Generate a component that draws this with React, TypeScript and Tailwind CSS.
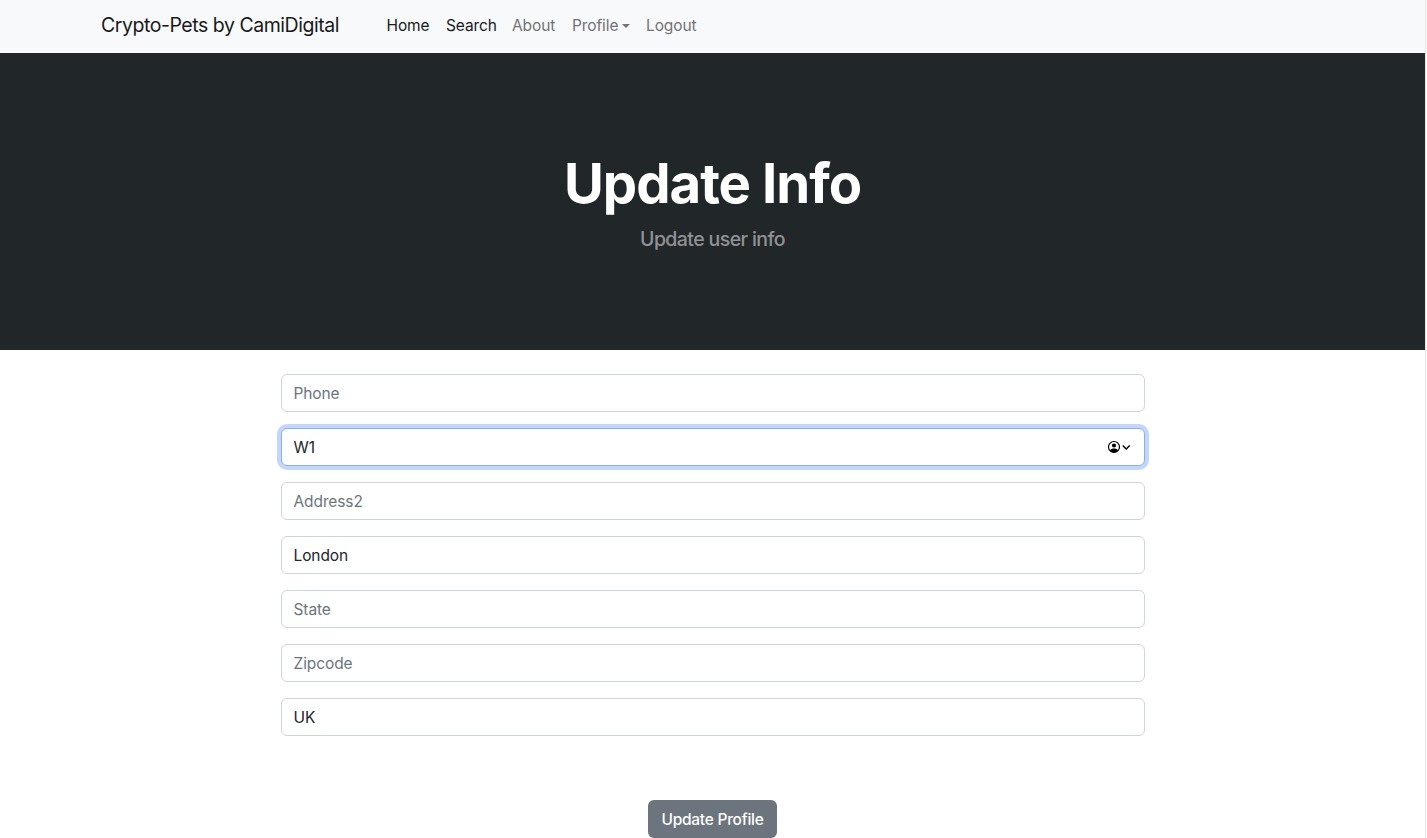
import React from "react";

type Field = { placeholder: string; value?: string; active?: boolean };

const fields: Field[] = [
  { placeholder: "Phone" },
  { placeholder: "Address1", value: "W1", active: true },
  { placeholder: "Address2" },
  { placeholder: "City", value: "London" },
  { placeholder: "State" },
  { placeholder: "Zipcode" },
  { placeholder: "Country", value: "UK" },
];

function ContactIcon() {
  return (
    <svg width="24" height="14" viewBox="0 0 24 14" fill="none" className="shrink-0">
      <circle cx="7" cy="7" r="5.5" stroke="#000" strokeWidth="1.2" />
      <circle cx="7" cy="5.5" r="2.1" fill="#000" />
      <path d="M2.9 10.3C3.8 8.8 5.3 8.4 7 8.4s3.2.4 4.1 1.9C10.1 11.8 8.7 12.5 7 12.5s-3.1-.7-4.1-2.2Z" fill="#000" />
      <path d="M15.700 5.400L19.200 8.900L22.700 5.400" stroke="#000" strokeWidth="1.400" />
    </svg>
  );
}

function FormField({ placeholder, value, active }: Field) {
  return (
    <div
      className={
        active
          ? "flex h-[38px] items-center rounded-md border border-[#86b0f0] bg-white pr-[13px] pl-3 ring-4 ring-[#c5d7f8]"
          : "flex h-[38px] items-center rounded-md border border-[#ced4da] bg-white px-3"
      }
    >
      <input
        aria-label={placeholder}
        placeholder={placeholder}
        defaultValue={value}
        className="min-w-0 flex-1 bg-transparent pt-0.5 text-[15.5px] leading-6 tracking-[-0.1px] text-[#212529] outline-none placeholder:text-[#6c757d]"
      />
      {active && <ContactIcon />}
    </div>
  );
}

export default function App() {
  return (
    <div className="flex h-[838px] overflow-hidden bg-white font-['Inter',sans-serif] text-[#212529]">
      <div className="flex min-w-0 flex-1 flex-col">
        <nav className="flex h-[53px] shrink-0 items-center bg-[#f8f9fa] pb-px pl-[101px] whitespace-nowrap">
          <a className="w-[285.500px] pb-0.5 text-[19.500px] leading-[30px] tracking-[-0.460px] text-[#18191a]">Crypto-Pets by CamiDigital</a>
          <div className="flex text-[15.500px] leading-6 tracking-[-0.1px] text-[#727374]">
            <a className="w-[59.500px] text-[#18191a]">Home</a>
            <a className="w-[66px] text-[#18191a]">Search</a>
            <a className="w-[60px]">About</a>
            <a className="flex w-[74px] items-center gap-1">
              Profile
              <svg width="8" height="4" viewBox="0 0 8 4" fill="currentColor"><path d="M0 0h8L4 4Z" /></svg>
            </a>
            <a>Logout</a>
          </div>
        </nav>
        <header className="flex h-[297px] shrink-0 flex-col items-center bg-[#212629] pt-[97px] text-center text-white">
          <h1 className="text-[54.500px] leading-[67px] font-bold tracking-[-1px]">Update Info</h1>
          <p className="mt-[7px] text-[19.500px] leading-[30px] font-medium tracking-[-0.600px] text-white/50">Update user info</p>
        </header>
        <main className="flex flex-col items-center pt-6">
          <form className="flex w-[864px] flex-col gap-4">
            {fields.map((f) => <FormField key={f.placeholder} {...f} />)}
          </form>
          <button className="mt-16 h-[38px] w-[129px] rounded-md bg-[#6c757d] pt-0.5 text-[15.500px] leading-6 font-medium tracking-[-0.250px] text-white">
            Update Profile
          </button>
        </main>
      </div>
      <div className="w-[2px] shrink-0 border-l border-[#e8e8e8] bg-[#fafafa]" />
    </div>
  );
}
